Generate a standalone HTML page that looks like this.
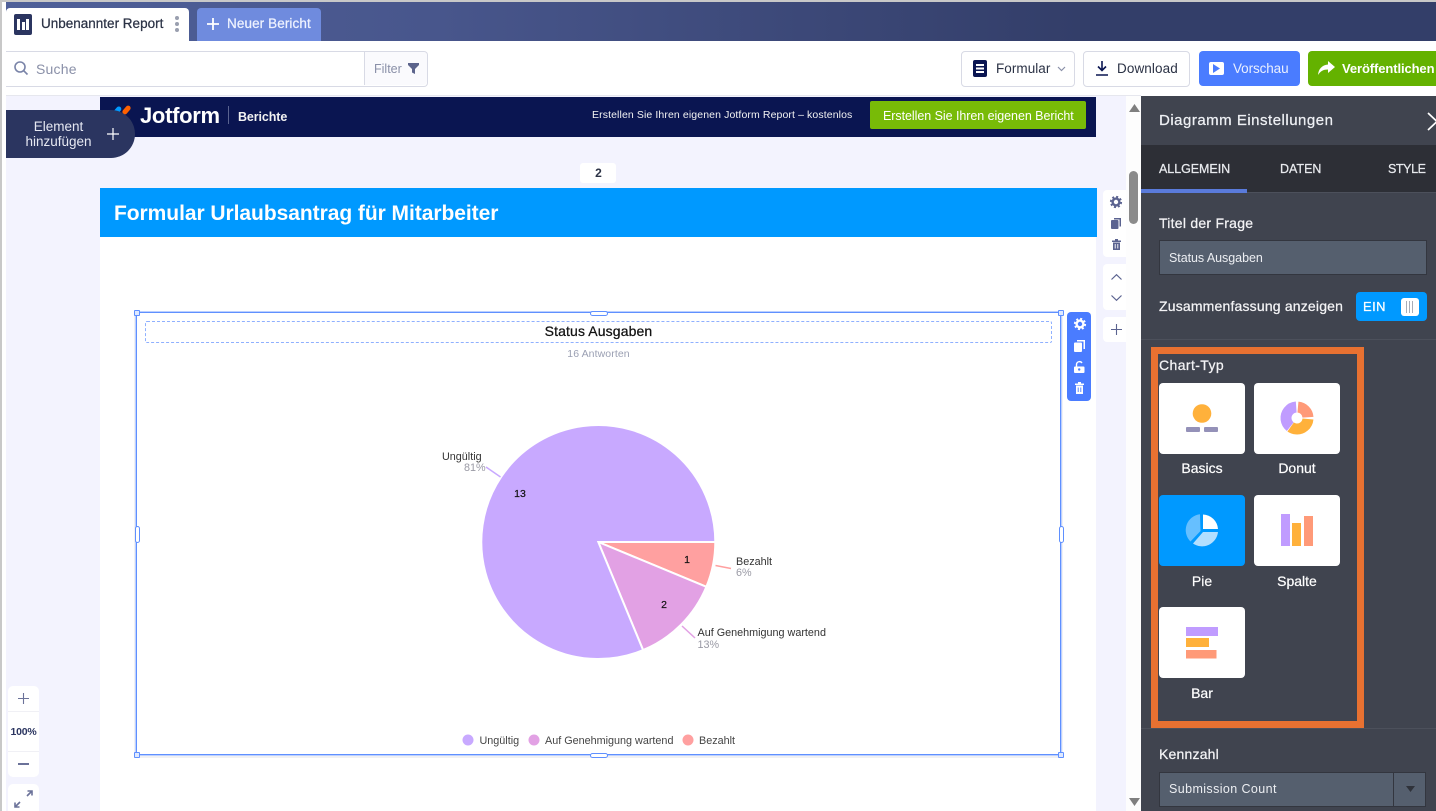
<!DOCTYPE html>
<html><head><meta charset="utf-8">
<style>
html,body{margin:0;padding:0;width:1436px;height:811px;overflow:hidden;background:#fff}
body{position:relative;font-family:"Liberation Sans",sans-serif}
.a{position:absolute}
.t{position:absolute;white-space:nowrap;line-height:1}
.m{-webkit-text-stroke:.25px currentColor}
svg{position:absolute;overflow:visible}
.card{position:absolute;width:86px;height:71px;background:#fff;border-radius:4px}
.lab{position:absolute;width:86px;text-align:center;color:#fff;font-size:14px;font-weight:400;line-height:1;-webkit-text-stroke:.2px #fff}
.h{position:absolute;border:1px solid #5f90ff;background:#dfe9ff;border-radius:1px;width:4px;height:4px}
.g{position:absolute;border:1px solid #5f90ff;background:#fff;border-radius:3px}
</style></head><body>
<!-- chrome -->
<div class="a" style="left:0;top:0;width:1436px;height:2px;background:#c8c8c8"></div>
<div class="a" style="left:0;top:0;width:1.5px;height:811px;background:#c8c8c8"></div>
<div class="a" style="left:6px;top:2px;width:1430px;height:39px;background:linear-gradient(90deg,#4f6099 0%,#48568c 30%,#333e69 75%,#333e69 100%)"></div>
<!-- tabs -->
<div class="a" style="left:6px;top:8px;width:183px;height:33px;background:#fff;border-radius:4px 4px 0 0"></div>
<div class="a" style="left:14px;top:14px;width:18px;height:21px;background:#2b3560;border-radius:2px"></div>
<div class="a" style="left:17px;top:19px;width:3px;height:11px;background:#fff"></div>
<div class="a" style="left:21.5px;top:22px;width:3px;height:8px;background:#fff"></div>
<div class="a" style="left:26px;top:19px;width:3px;height:11px;background:#fff"></div>
<div class="t m" style="left:41px;top:17px;font-size:13.5px;color:#2b3245;letter-spacing:0">Unbenannter Report</div>
<div class="a" style="left:175px;top:16px;width:4px;height:4px;border-radius:50%;background:#9a9faf"></div>
<div class="a" style="left:175px;top:22px;width:4px;height:4px;border-radius:50%;background:#9a9faf"></div>
<div class="a" style="left:175px;top:28px;width:4px;height:4px;border-radius:50%;background:#9a9faf"></div>
<div class="a" style="left:197px;top:8px;width:124px;height:33px;background:#6f8bde;border-radius:4px 4px 0 0"></div>
<svg style="left:207px;top:18px" width="12" height="12"><path d="M6 0V12M0 6H12" stroke="#fff" stroke-width="1.8"/></svg>
<div class="t m" style="left:227px;top:17px;font-size:13.5px;color:#eef2ff;letter-spacing:.1px">Neuer Bericht</div>
<!-- toolbar -->
<div class="a" style="left:6px;top:51px;width:421px;height:34px;border:1px solid #d8dae5;border-left:none;border-radius:0 4px 4px 0;background:#fff"></div>
<div class="a" style="left:364px;top:52px;width:62px;height:33px;border-left:1px solid #d8dae5;background:#fafafd;border-radius:0 4px 4px 0"></div>
<svg style="left:14px;top:61px" width="15" height="15" fill="none" stroke="#7a84a8" stroke-width="1.6"><circle cx="6" cy="6" r="5"/><path d="M9.7 9.7L13.5 13.5"/></svg>
<div class="t" style="left:36px;top:62px;font-size:14px;color:#8a90a8;letter-spacing:.2px">Suche</div>
<div class="t" style="left:374px;top:63px;font-size:12.5px;color:#8a90a8">Filter</div>
<svg style="left:408px;top:63px" width="11" height="11"><path d="M0 0H11V2L7 6V11L4 9.5V6L0 2Z" fill="#5c648c"/></svg>
<div class="a" style="left:961px;top:51px;width:112px;height:34px;border:1px solid #d8dae5;border-radius:4px;background:#fff"></div>
<div class="a" style="left:973px;top:60px;width:14px;height:17px;background:#0a1551;border-radius:2px"></div>
<div class="a" style="left:976px;top:64px;width:8px;height:1.5px;background:#fff;box-shadow:0 3.5px 0 #fff,0 7px 0 #fff"></div>
<div class="t" style="left:996px;top:62px;font-size:13.5px;color:#2b3245;letter-spacing:.05px">Formular</div>
<svg style="left:1057px;top:66px" width="9" height="6" fill="none" stroke="#8a90a8" stroke-width="1.2"><path d="M1 1L4.5 4.5L8 1"/></svg>
<div class="a" style="left:1083px;top:51px;width:105px;height:34px;border:1px solid #d8dae5;border-radius:4px;background:#fff"></div>
<svg style="left:1096px;top:61px" width="12" height="15" fill="none" stroke="#0a1551" stroke-width="1.6"><path d="M6 0V9M2 5.5L6 9.5L10 5.5M0 14H12"/></svg>
<div class="t" style="left:1117px;top:62px;font-size:13.5px;color:#2b3245;letter-spacing:.1px">Download</div>
<div class="a" style="left:1199px;top:51px;width:101px;height:35px;background:#4a7cff;border-radius:4px"></div>
<div class="a" style="left:1209px;top:62px;width:15px;height:13px;background:#fff;border-radius:2px"></div>
<svg style="left:1213px;top:64px" width="8" height="9"><path d="M0 0L7 4.5L0 9Z" fill="#4a7cff"/></svg>
<div class="t" style="left:1233px;top:62px;font-size:13.5px;color:#e9efff;letter-spacing:-.1px">Vorschau</div>
<div class="a" style="left:1308px;top:51px;width:128px;height:35px;background:#64b200;border-radius:4px 0 0 4px"></div>
<svg style="left:1318px;top:61px" width="17" height="15"><path d="M10 0L17 6L10 12V8.5C5.5 8.5 2.5 10 0 14C.5 8 4 4 10 3.5Z" fill="#fff"/></svg>
<div class="t" style="left:1342px;top:62px;font-size:13px;color:#fff;font-weight:700;letter-spacing:-.1px">Veröffentlichen</div>
<!-- canvas -->
<div class="a" style="left:6px;top:96px;width:1120px;height:715px;background:#f3f3fe"></div>
<div class="a" style="left:6px;top:95px;width:1135px;height:1px;background:#e6e7ee"></div>
<div class="a" style="left:1126px;top:96px;width:15px;height:715px;background:#fdfdfd"></div>
<svg style="left:1129px;top:104px" width="11" height="9"><path d="M5.5 0L11 8H0Z" fill="#7f7f7f"/></svg>
<svg style="left:1129px;top:798px" width="11" height="9"><path d="M5.5 8L11 0H0Z" fill="#7f7f7f"/></svg>
<div class="a" style="left:1129px;top:171px;width:9px;height:53px;background:#8b8b8b;border-radius:5px"></div>
<!-- page top banner -->
<div class="a" style="left:100px;top:97px;width:996px;height:40px;background:#0a1551"></div>
<div class="a" style="left:115px;top:106px;width:5px;height:9px;background:#0099ff;border-radius:3px;transform:rotate(40deg)"></div>
<div class="a" style="left:124px;top:105px;width:5px;height:10px;background:#ff6100;border-radius:3px;transform:rotate(40deg)"></div>
<div class="t" style="left:140px;top:105px;font-size:22px;font-weight:700;color:#fff;letter-spacing:-.3px">Jotform</div>
<div class="a" style="left:228px;top:106px;width:1px;height:18px;background:#5a6390"></div>
<div class="t" style="left:238px;top:111px;font-size:12.5px;font-weight:700;color:#f2f2f2;letter-spacing:-.1px">Berichte</div>
<div class="t" style="left:592px;top:110px;font-size:10.5px;color:#f2f2f2;letter-spacing:.11px">Erstellen Sie Ihren eigenen Jotform Report – kostenlos</div>
<div class="a" style="left:870px;top:101px;width:216px;height:28px;background:#78bb07;border-radius:2px"></div>
<div class="t" style="left:883px;top:110px;font-size:12.5px;color:#fff;letter-spacing:-.05px">Erstellen Sie Ihren eigenen Bericht</div>
<!-- add element -->
<div class="a" style="left:6px;top:110px;width:129px;height:48px;background:#2b3560;border-radius:0 24px 24px 0"></div>
<div class="t" style="left:6px;top:119px;width:105px;text-align:center;font-size:13.5px;color:#e6e8f2;line-height:15px;white-space:normal">Element<br>hinzufügen</div>
<svg style="left:107px;top:128px" width="12" height="12"><path d="M6 0V12M0 6H12" stroke="#fff" stroke-width="1.2"/></svg>
<!-- page number -->
<div class="a" style="left:580px;top:163px;width:36px;height:20px;background:#fff;border-radius:3px"></div>
<div class="t" style="left:580px;top:167px;width:37px;text-align:center;font-size:12px;font-weight:700;color:#2b3245">2</div>
<!-- page -->
<div class="a" style="left:100px;top:188px;width:996px;height:623px;background:#fff"></div>
<div class="a" style="left:100px;top:188px;width:997px;height:49px;background:#0099ff"></div>
<div class="t" style="left:114px;top:203px;font-size:21px;font-weight:700;color:#fff;letter-spacing:-.05px">Formular Urlaubsantrag für Mitarbeiter</div>
<!-- right mini tools -->
<div class="a" style="left:1103px;top:190px;width:23px;height:67px;background:#fff;border-radius:4px 0 0 4px"></div>
<div class="a" style="left:1103px;top:264px;width:23px;height:46px;background:#fff;border-radius:4px 0 0 4px"></div>
<div class="a" style="left:1103px;top:317px;width:23px;height:25px;background:#fff;border-radius:4px 0 0 4px"></div>
<svg style="left:1110px;top:196px" width="12" height="12" fill="none" stroke="#5b6390"><circle cx="6" cy="6" r="3.4" stroke-width="2.4"/><circle cx="6" cy="6" r="5.2" stroke-width="1.8" stroke-dasharray="2.05 2.03"/></svg>
<svg style="left:1111px;top:218px" width="10" height="11"><path d="M3 0H10V8.5H8.5V1.5H3Z" fill="#5b6390"/><rect x="0" y="2" width="7.5" height="9" rx="1" fill="#5b6390"/></svg>
<svg style="left:1112px;top:239px" width="9" height="11" fill="#5b6390"><path d="M0 1.5H9V3H0ZM3 0H6V1.5H3Z"/><path d="M1 3.5H8V11H1Z"/><path d="M3.2 5V9.5M5.8 5V9.5" stroke="#fff" stroke-width=".9"/></svg>
<svg style="left:1111px;top:274px" width="11" height="6" fill="none" stroke="#5b6390" stroke-width="1.2"><path d="M.5 5.5L5.5 .7L10.5 5.5"/></svg>
<svg style="left:1111px;top:295px" width="11" height="6" fill="none" stroke="#5b6390" stroke-width="1.2"><path d="M.5 .5L5.5 5.3L10.5 .5"/></svg>
<svg style="left:1111px;top:324px" width="11" height="11"><path d="M5.5 0V11M0 5.5H11" stroke="#5b6390" stroke-width="1.1"/></svg>
<!-- selection box -->
<div class="a" style="left:134px;top:311px;width:929px;height:447px;background:#f1f1f3"></div>
<div class="a" style="left:136px;top:312px;width:923px;height:441px;border:1px solid #5f90ff;box-shadow:0 0 0 1px #bcd0ff;background:#fff"></div>
<div class="h" style="left:134px;top:310px"></div>
<div class="h" style="left:1058px;top:310px"></div>
<div class="h" style="left:134px;top:752px"></div>
<div class="h" style="left:1058px;top:752px"></div>
<div class="g" style="left:590px;top:310.5px;width:16px;height:3px"></div>
<div class="g" style="left:590px;top:752.5px;width:16px;height:3px"></div>
<div class="g" style="left:134.5px;top:526px;width:3px;height:15px"></div>
<div class="g" style="left:1058.5px;top:526px;width:3px;height:15px"></div>
<div class="a" style="left:145px;top:321px;width:905px;height:20px;border:1px dashed #8fb0ff;border-radius:2px"></div>
<div class="t m" style="left:145px;top:324px;width:907px;text-align:center;font-size:14px;color:#111;letter-spacing:.12px">Status Ausgaben</div>
<div class="t" style="left:145px;top:349px;width:907px;text-align:center;font-size:10.5px;color:#9a9fb2;letter-spacing:.1px">16 Antworten</div>
<!-- blue tools -->
<div class="a" style="left:1067px;top:312px;width:24px;height:89px;background:#4a7cff;border-radius:4px"></div>
<svg style="left:1074px;top:318px" width="12" height="12" fill="none" stroke="#fff"><circle cx="6" cy="6" r="3.4" stroke-width="2.4"/><circle cx="6" cy="6" r="5.2" stroke-width="1.8" stroke-dasharray="2.05 2.03"/></svg>
<svg style="left:1074px;top:340px" width="11" height="12"><path d="M3 0H11V9H9.5V1.5H3Z" fill="#fff"/><rect x="0" y="2.5" width="8" height="9.5" rx="1" fill="#fff"/></svg>
<svg style="left:1074px;top:361px" width="11" height="12"><path d="M2.5 6V3.5A3 3 0 0 1 8 2" fill="none" stroke="#fff" stroke-width="1.4"/><rect x="0" y="5.5" width="10.5" height="6.5" rx="1" fill="#fff"/><circle cx="5.2" cy="8.5" r="1.2" fill="#4a7cff"/></svg>
<svg style="left:1075px;top:382px" width="9" height="12" fill="#fff"><path d="M0 1.5H9V3H0ZM3 0H6V1.5H3Z"/><path d="M1 3.5H8V12H1Z"/><path d="M3.2 5.5V10M5.8 5.5V10" stroke="#4a7cff" stroke-width=".9"/></svg>
<!-- pie -->
<svg style="left:0;top:0" width="1436" height="811">
<path d="M598.3 542L715.3 542A117 117 0 0 1 706.4 586.8Z" fill="#ffa0a0" stroke="#fff" stroke-width="2"/>
<path d="M598.3 542L706.4 586.8A117 117 0 0 1 643.1 650.1Z" fill="#e2a1e4" stroke="#fff" stroke-width="2"/>
<path d="M598.3 542L643.1 650.1A117 117 0 1 1 715.3 542Z" fill="#c8a9ff" stroke="#fff" stroke-width="2"/>
<path d="M486 467L500.5 477" stroke="#c8a9ff" stroke-width="1.5"/>
<path d="M715.5 565.5L731 568.5" stroke="#ffa0a0" stroke-width="1.5"/>
<path d="M682 626L695 638" stroke="#e2a1e4" stroke-width="1.5"/>
<text x="520" y="497" font-size="10.5" text-anchor="middle" fill="#111" font-family="Liberation Sans" stroke="#111" stroke-width=".2">13</text>
<text x="687" y="563" font-size="10.5" text-anchor="middle" fill="#111" font-family="Liberation Sans" stroke="#111" stroke-width=".2">1</text>
<text x="664" y="608" font-size="10.5" text-anchor="middle" fill="#111" font-family="Liberation Sans" stroke="#111" stroke-width=".2">2</text>
<g font-family="Liberation Sans" font-size="10.8">
<text x="442" y="460" fill="#333">Ungültig</text>
<text x="464" y="471" fill="#9a9aa5">81%</text>
<text x="736" y="565" fill="#333">Bezahlt</text>
<text x="736" y="576" fill="#9a9aa5">6%</text>
<text x="697.5" y="636" fill="#333">Auf Genehmigung wartend</text>
<text x="697.5" y="648" fill="#9a9aa5">13%</text>
<text x="479.5" y="744" fill="#444">Ungültig</text>
<text x="545" y="744" fill="#444">Auf Genehmigung wartend</text>
<text x="699" y="744" fill="#444">Bezahlt</text>
</g>
<circle cx="468" cy="740" r="5.5" fill="#c8a9ff"/>
<circle cx="534" cy="740" r="5.5" fill="#e2a1e4"/>
<circle cx="688" cy="740" r="5.5" fill="#ffa0a0"/>
</svg>
<!-- zoom tools -->
<div class="a" style="left:8px;top:686px;width:31px;height:91px;background:#fff;border-radius:5px"></div>
<div class="a" style="left:8px;top:711px;width:31px;height:1px;background:#f0f0f5"></div>
<div class="a" style="left:8px;top:751px;width:31px;height:1px;background:#f0f0f5"></div>
<svg style="left:18px;top:693px" width="11" height="11"><path d="M5.5 0V11M0 5.5H11" stroke="#6b7299" stroke-width="1.1"/></svg>
<div class="t" style="left:8px;top:727px;width:31px;text-align:center;font-size:10.5px;font-weight:700;color:#2b3560;letter-spacing:-.2px">100%</div>
<div class="a" style="left:18px;top:763px;width:11px;height:2px;background:#6b7299"></div>
<div class="a" style="left:8px;top:784px;width:31px;height:27px;background:#fff;border-radius:5px 5px 0 0"></div>
<svg style="left:14px;top:790px" width="19" height="18" fill="none" stroke="#6b7299" stroke-width="1.6"><path d="M13.5 1H18V5.5M18 1L13 6M1 12.5V17H5.5M1 17L6 12"/></svg>
<!-- panel -->
<div class="a" style="left:1141px;top:96px;width:295px;height:715px;background:#40444f"></div>
<div class="t m" style="left:1159px;top:113px;font-size:15px;color:#eef0f4;letter-spacing:.5px">Diagramm Einstellungen</div>
<svg style="left:1427px;top:112px" width="10" height="19" fill="none" stroke="#fff" stroke-width="1.7"><path d="M1 1L10 9.5L1 18"/></svg>
<div class="a" style="left:1141px;top:145px;width:295px;height:48px;background:#2d2f36"></div>
<div class="a" style="left:1141px;top:189px;width:106px;height:4px;background:#5a7bdb"></div>
<div class="a" style="left:1247px;top:192px;width:189px;height:1px;background:#4c505b"></div>
<div class="t m" style="left:1159px;top:163px;font-size:12.5px;color:#e8eaee;letter-spacing:-.05px">ALLGEMEIN</div>
<div class="t m" style="left:1280px;top:163px;font-size:12.5px;color:#e8eaee">DATEN</div>
<div class="t m" style="left:1388px;top:163px;font-size:12.5px;color:#e8eaee;letter-spacing:-.4px">STYLE</div>
<div class="t m" style="left:1159px;top:216px;font-size:14px;color:#f3f3f5;letter-spacing:.25px">Titel der Frage</div>
<div class="a" style="left:1159px;top:240px;width:266px;height:33px;background:#555f6e;border:1px solid #33363f"></div>
<div class="t" style="left:1169px;top:252px;font-size:12.5px;color:#eceef2;letter-spacing:-.05px">Status Ausgaben</div>
<div class="t m" style="left:1159px;top:299px;font-size:14px;color:#f3f3f5;letter-spacing:.18px">Zusammenfassung anzeigen</div>
<div class="a" style="left:1356px;top:292px;width:71px;height:29px;background:#0099ff;border-radius:4px"></div>
<div class="t m" style="left:1363px;top:300px;font-size:13px;color:#fff;letter-spacing:.4px">EIN</div>
<div class="a" style="left:1401px;top:298px;width:18px;height:18px;background:#fff;border-radius:3px"></div>
<div class="a" style="left:1406px;top:301px;width:1px;height:12px;background:#a8adb8;box-shadow:3px 0 0 #a8adb8,6px 0 0 #a8adb8"></div>
<div class="a" style="left:1141px;top:339px;width:295px;height:1px;background:#4c505b"></div>
<div class="a" style="left:1141px;top:728px;width:295px;height:1px;background:#4c505b"></div>
<!-- orange -->
<div class="a" style="left:1151px;top:347px;width:199px;height:367px;border:7px solid #e87131"></div>
<div class="t m" style="left:1159px;top:358px;font-size:14px;color:#f3f3f5;letter-spacing:.4px">Chart-Typ</div>
<!-- cards -->
<div class="card" style="left:1159px;top:383px"></div>
<div class="card" style="left:1254px;top:383px"></div>
<div class="card" style="left:1159px;top:495px;background:#0099ff"></div>
<div class="card" style="left:1254px;top:495px"></div>
<div class="card" style="left:1159px;top:607px"></div>
<div class="lab" style="left:1159px;top:461px">Basics</div>
<div class="lab" style="left:1254px;top:461px">Donut</div>
<div class="lab" style="left:1159px;top:574px">Pie</div>
<div class="lab" style="left:1254px;top:574px">Spalte</div>
<div class="lab" style="left:1159px;top:686px">Bar</div>
<svg style="left:0;top:0" width="1436" height="811">
<!-- basics -->
<circle cx="1202" cy="413.5" r="9.3" fill="#ffb13b"/>
<rect x="1186" y="427" width="14" height="5" rx="1" fill="#9491b8"/>
<rect x="1204" y="427" width="14" height="5" rx="1" fill="#9491b8"/>
<!-- donut -->
<g fill="none" stroke-width="11">
<circle cx="1297" cy="418" r="11" stroke="#ff9a78" stroke-dasharray="15.4 70" transform="rotate(-85 1297 418)"/>
<circle cx="1297" cy="418" r="11" stroke="#ffb13b" stroke-dasharray="23 70" transform="rotate(5 1297 418)"/>
<circle cx="1297" cy="418" r="11" stroke="#c09cff" stroke-dasharray="26.3 70" transform="rotate(128 1297 418)"/>
</g>
<!-- pie icon -->
<path d="M1203 514.5V529H1218A15.5 15.5 0 0 0 1203 514.5Z" fill="#fff"/>
<path d="M1200 514.2A16 16 0 0 0 1190.5 541.5L1200.5 531Z" fill="#66bfff"/>
<path d="M1193 543.5A16 16 0 0 0 1218 532H1203Z" fill="#b3dfff"/>
<!-- column -->
<rect x="1281" y="514" width="9" height="32" fill="#c09cff"/>
<rect x="1292" y="523" width="9" height="23" fill="#ffb13b"/>
<rect x="1304" y="516" width="9" height="30" fill="#ff9a78"/>
<!-- bar -->
<rect x="1186" y="627" width="32" height="9" fill="#c09cff"/>
<rect x="1186" y="638" width="23" height="9" fill="#ffb13b"/>
<rect x="1186" y="650" width="30.5" height="8.5" fill="#ff9a78"/>
</svg>
<div class="t m" style="left:1159px;top:747px;font-size:14px;color:#f3f3f5;letter-spacing:.2px">Kennzahl</div>
<div class="a" style="left:1159px;top:772px;width:265px;height:33px;background:#555f6e;border:1px solid #33363f"></div>
<div class="a" style="left:1393px;top:772px;width:1px;height:34px;background:#33363f"></div>
<div class="t" style="left:1169px;top:783px;font-size:12.5px;color:#eceef2;letter-spacing:.4px">Submission Count</div>
<svg style="left:1405px;top:786px" width="11" height="7"><path d="M1 0H10L5.5 6Z" fill="#2f323a"/></svg>
</body></html>
